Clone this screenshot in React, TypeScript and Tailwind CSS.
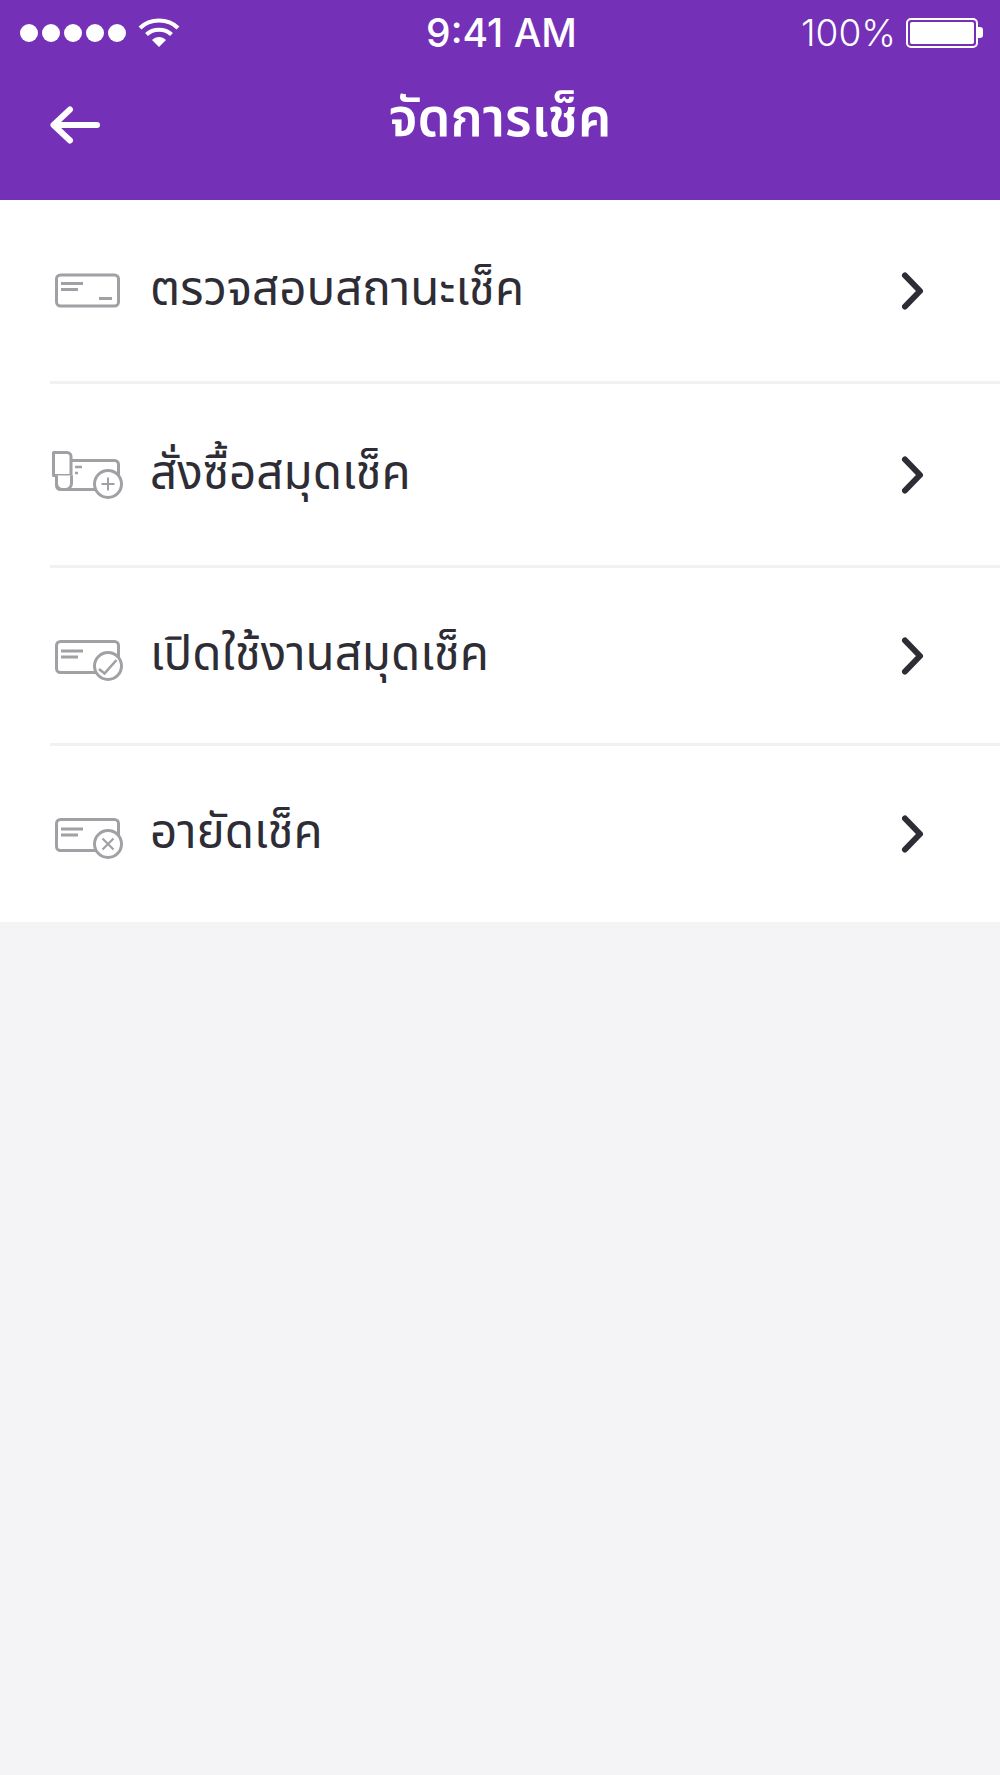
const thai = "font-['Noto_Sans_Thai','Noto_Sans','Open_Sans','DejaVu_Sans',sans-serif]";

const stroke = "#a0a0a5";

function Svg({ children }: { children: React.ReactNode }) {
  return (
    <svg width="72" height="52" viewBox="0 0 72 52" fill="none" stroke={stroke} className="block">
      {children}
    </svg>
  );
}

function CheckBody() {
  return (
    <>
      <rect x="4.5" y="11.5" width="62" height="31" rx="4" strokeWidth="3" />
      <path d="M9 21h22M9 27h17" strokeWidth="2.8" />
    </>
  );
}

function IconStatus() {
  return (
    <Svg>
      <rect x="4.5" y="10" width="62" height="31" rx="4" strokeWidth="3" />
      <path d="M9 18.5h22M9 24.5h17M47 33.5h13" strokeWidth="2.8" />
    </Svg>
  );
}

function IconOrder() {
  return (
    <Svg>
      <rect x="4.5" y="11.5" width="62" height="29" rx="4" strokeWidth="3" />
      <path d="M1.5 3.5H15a4 4 0 0 1 4 4v19H1.5z" fill="white" strokeWidth="3" strokeLinejoin="round" />
      <path d="M4.5 26.5v8a6 6 0 0 0 6 6h3a6 6 0 0 0 6-6v-8" fill="white" strokeWidth="3" />
      <path d="M23 18h7M23 24h3" strokeWidth="2.4" />
      <circle cx="56" cy="35" r="13.5" fill="white" strokeWidth="3" />
      <path d="M56 28.5v13M49.5 35h13" strokeWidth="2" />
    </Svg>
  );
}

function IconActivate() {
  return (
    <Svg>
      <CheckBody />
      <circle cx="56" cy="36" r="13.5" fill="white" strokeWidth="3" />
      <path d="M47 39l5.5 4.5L64.5 30" strokeWidth="2.6" />
    </Svg>
  );
}

function IconCancel() {
  return (
    <Svg>
      <CheckBody />
      <circle cx="56" cy="36" r="13.5" fill="white" strokeWidth="3" />
      <path d="M50.5 30.5l11 11M61.5 30.5l-11 11" strokeWidth="2.2" />
    </Svg>
  );
}

function Chevron() {
  return (
    <svg width="26" height="40" viewBox="0 0 26 40" fill="none" className="block">
      <path d="M5 4.5L20 20L5 35.5" stroke="#2e2d36" strokeWidth="6" strokeLinecap="round" strokeLinejoin="round" />
    </svg>
  );
}

function Row({ icon, label, h, divider }: { icon: React.ReactNode; label: string; h: string; divider: boolean }) {
  return (
    <div className={`${h} ml-[50px] flex items-center ${divider ? "border-b-[3px] border-[#f1f1f2]" : ""}`}>
      <div className="w-[100px] shrink-0 pl-[2px]">{icon}</div>
      <span className={`flex-1 text-[47.5px] font-[440] leading-none text-[#2e2d36] ${thai}`}>{label}</span>
      <div className="w-[26px] mr-[74px] flex justify-center">
        <Chevron />
      </div>
    </div>
  );
}

export default function App() {
  return (
    <div className="w-[1000px] h-[1775px] bg-[#f4f3f6] flex flex-col">
      <header className="h-[200px] bg-[#7530b8] text-white flex flex-col">
        <div className="h-[65px] pl-[20px] pr-[17px] flex items-center justify-between font-['Inter',sans-serif] text-[37px] leading-none">
          <div className="w-[320px] flex items-center gap-[12px]">
            <div className="flex gap-[4px]">
              <span className="w-[18px] h-[18px] rounded-full bg-white" />
              <span className="w-[18px] h-[18px] rounded-full bg-white" />
              <span className="w-[18px] h-[18px] rounded-full bg-white" />
              <span className="w-[18px] h-[18px] rounded-full bg-white" />
              <span className="w-[18px] h-[18px] rounded-full bg-white" />
            </div>
            <svg width="42" height="30" viewBox="0 0 42 30" fill="none">
              <path d="M2 10C12 0 30 0 40 10" stroke="white" strokeWidth="4" />
              <path d="M8.5 16.5C15 10 27 10 33.5 16.5" stroke="white" strokeWidth="4" />
              <path d="M21 29l-7-7c4-4 10-4 14 0z" fill="white" />
            </svg>
          </div>
          <span className="font-medium text-[39px]">9:41 AM</span>
          <div className="w-[320px] flex items-center justify-end gap-[10px]">
            <span className="font-light">100%</span>
            <div className="flex items-center">
              <div className="w-[72px] h-[30px] rounded-[5px] border-2 border-white p-[2px]">
                <div className="w-full h-full bg-white rounded-[2px]" />
              </div>
              <div className="w-[5px] h-[11px] bg-white rounded-r-[3px]" />
            </div>
          </div>
        </div>
        <div className="flex-1 relative flex items-center justify-center pb-[25px]">
          <svg className="absolute left-[50px] top-[41px]" width="50" height="38" viewBox="0 0 50 38" fill="none">
            <path d="M47 19H4M20 3.5L3.5 19L20 34.5" stroke="white" strokeWidth="6" strokeLinecap="round" strokeLinejoin="round" />
          </svg>
          <h1 className={`text-[52.5px] leading-none font-semibold ${thai}`}>จัดการเช็ค</h1>
        </div>
      </header>
      <div className="bg-white">
        <Row h="h-[184px]" divider icon={<IconStatus />} label="ตรวจสอบสถานะเช็ค" />
        <Row h="h-[184px]" divider icon={<IconOrder />} label="สั่งซื้อสมุดเช็ค" />
        <Row h="h-[178px]" divider icon={<IconActivate />} label="เปิดใช้งานสมุดเช็ค" />
        <Row h="h-[176px]" divider={false} icon={<IconCancel />} label="อายัดเช็ค" />
      </div>
    </div>
  );
}
